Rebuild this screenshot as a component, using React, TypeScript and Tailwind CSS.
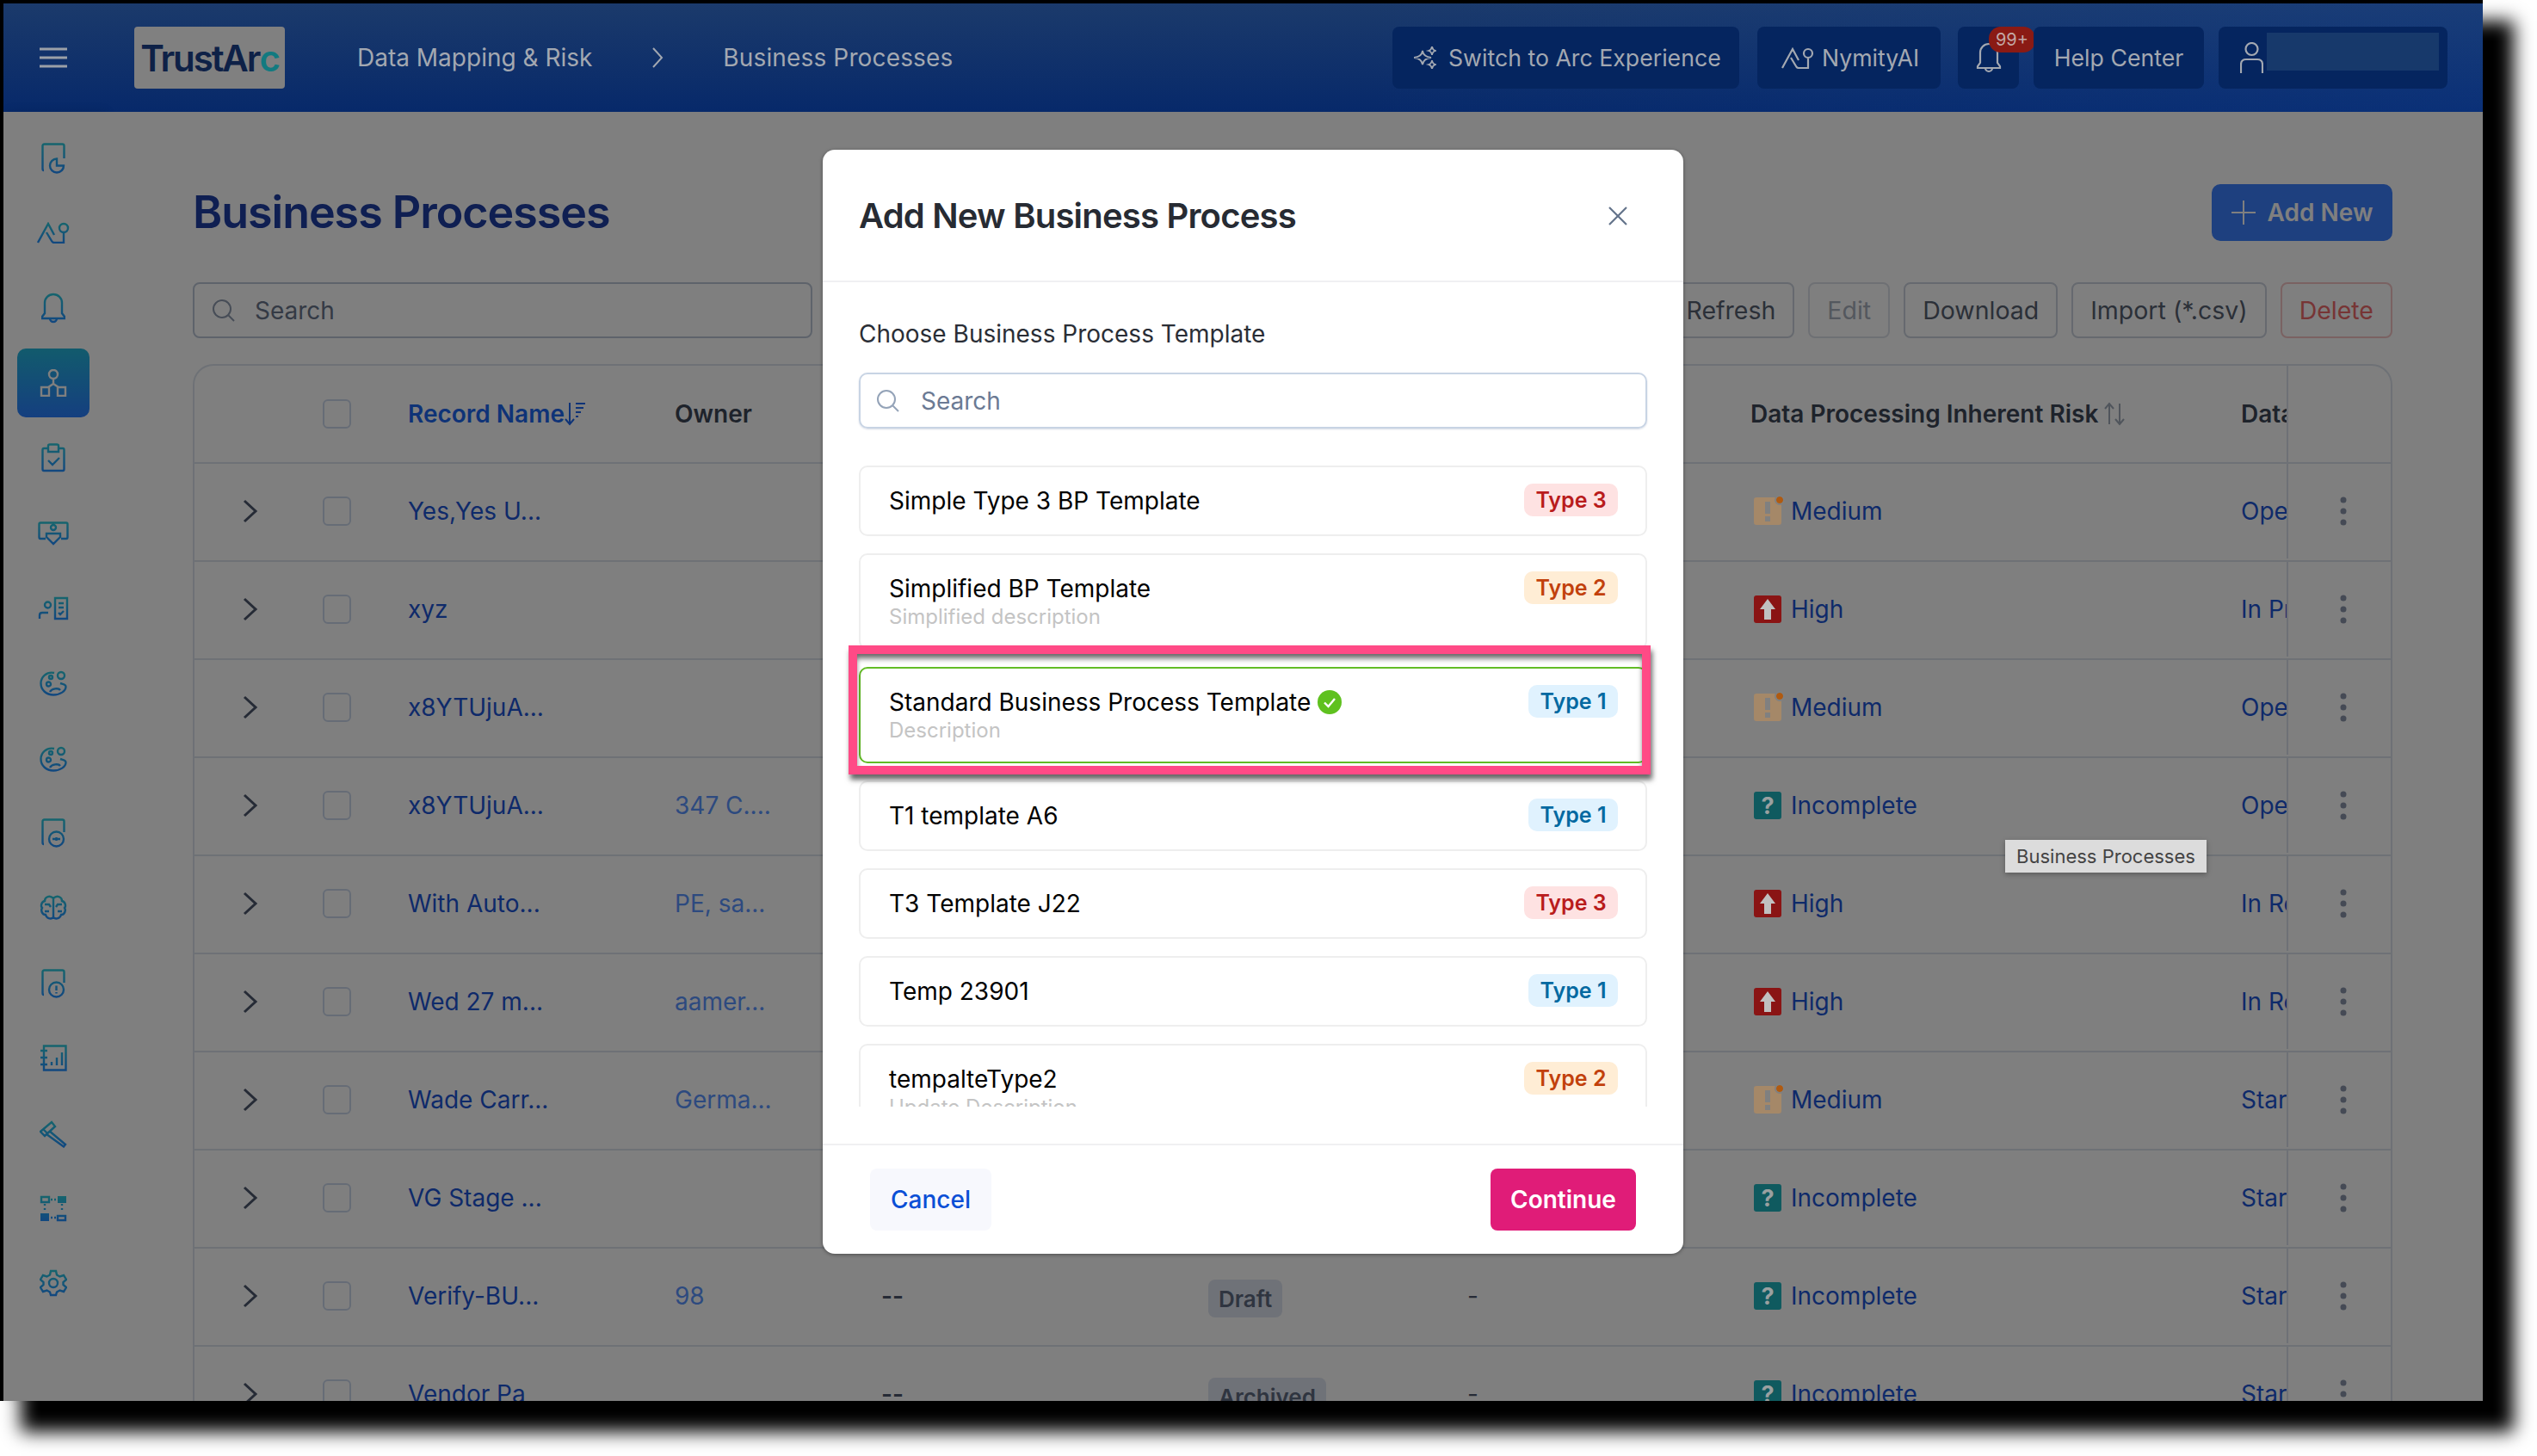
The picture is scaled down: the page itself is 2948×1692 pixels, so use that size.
import { ReactNode } from "react";

type SideIcon = { w: number; h: number; d: string; fill?: string };

const sideIcons: SideIcon[] = [
  { w: 28, h: 36, d: "M3 32 Q1.5 32 1.5 30 V3.5 Q1.5 1.5 3.5 1.5 H24.5 Q26.5 1.5 26.5 3.5 V18 M26 26.5 A8 8 0 1 1 18 18.5 V26.5 H26 A8 8 0 0 1 24 32" },
  { w: 38, h: 25, d: "M1 24 L13 2 L20 15 M11 12 L17 22 Q18 24 20 24 H31 V12 M36 7 A5 5 0 1 1 26 7 A5 5 0 1 1 36 7" },
  { w: 28, h: 36, d: "M4 24 V12 A10 10 0 0 1 24 12 V24 L27 28 V30 H1 V28 Z M10 30 A4 4 0 0 0 18 30" },
  { w: 32, h: 32, d: "M21 6 A5 5 0 1 1 11 6 A5 5 0 1 1 21 6 M16 11 V17 M16 17 L10 21 M16 17 L22 21 M2 21 H11 V31 H2 Z M21 21 H30 V31 H21 Z" },
  { w: 28, h: 34, d: "M8 6 H3 Q1.5 6 1.5 8 V30 Q1.5 32 3 32 H25 Q26.5 32 26.5 30 V8 Q26.5 6 25 6 H20 M8 10 V3 Q8 1.5 10 1.5 H18 Q20 1.5 20 3 V10 Z M8 20 L13 25 L21 17" },
  { w: 36, h: 28, d: "M9 20 H3 Q1.5 20 1.5 18 V3 Q1.5 1.5 3 1.5 H33 Q34.5 1.5 34.5 3 V18 Q34.5 20 33 20 H27 M21 7 A3 3 0 1 1 15 7 A3 3 0 1 1 21 7 M10 14 H26 V18 L18 26 L10 18 Z" },
  { w: 36, h: 28, d: "M2 26 V22 Q2 19 5 19 H12 M15 10 A3.5 3.5 0 1 1 8 10 A3.5 3.5 0 1 1 15 10 M20 2 H34 V26 H20 Z M24 8 H30 M24 13 H30 M24 19 L26 21 L30 17" },
  { w: 32, h: 31, d: "M17 4 C8 2 1.5 9 1.5 16 C1.5 24 8 29.5 16 29.5 C24 29.5 30.5 25 30.5 20 C30.5 17 27 17 24 16 M8 17 A2.5 2.5 0 1 1 13 17 A2.5 2.5 0 1 1 8 17 M11 9 A2 2 0 1 1 15 9 A2 2 0 1 1 11 9 M21 7 A4 4 0 1 1 29 7 A4 4 0 1 1 21 7 M12 26 C14 22 22 21 24 24" },
  { w: 32, h: 31, d: "M17 4 C8 2 1.5 9 1.5 16 C1.5 24 8 29.5 16 29.5 C24 29.5 30.5 25 30.5 20 C30.5 17 27 17 24 16 M8 17 A2.5 2.5 0 1 1 13 17 A2.5 2.5 0 1 1 8 17 M11 9 A2 2 0 1 1 15 9 A2 2 0 1 1 11 9 M21 7 A4 4 0 1 1 29 7 A4 4 0 1 1 21 7 M12 26 C14 22 22 21 24 24" },
  { w: 28, h: 34, d: "M3 30 Q1.5 30 1.5 28 V3.5 Q1.5 1.5 3.5 1.5 H24.5 Q26.5 1.5 26.5 3.5 V16 M26 24 A8.5 8.5 0 1 1 9 24 A8.5 8.5 0 1 1 26 24 M13 24 H22 M17.5 22 V26" },
  { w: 32, h: 32, d: "M16 3 V29 M16 5 C12 1 6 3 6 8 C2 9 1 14 3 16 C1 19 3 24 7 24 C8 28 13 30 16 27 M16 5 C20 1 26 3 26 8 C30 9 31 14 29 16 C31 19 29 24 25 24 C24 28 19 30 16 27 M6 12 H11 L13 15 M26 12 H21 L19 15 M6 20 H11 M26 20 H21" },
  { w: 28, h: 34, d: "M3 30 Q1.5 30 1.5 28 V3.5 Q1.5 1.5 3.5 1.5 H24.5 Q26.5 1.5 26.5 3.5 V16 M26 24 A8.5 8.5 0 1 1 9 24 A8.5 8.5 0 1 1 26 24 M17.5 19.5 V25 M17.5 27 V28.5" },
  { w: 32, h: 31, d: "M5 1.5 H30.5 V29.5 H5 Z M1 7 H9 M1 15 H9 M1 23 H9 M14 24 V20 M20 24 V15 M26 24 V9" },
  { w: 32, h: 33, d: "M1 14 L14 3 L18 8 L6 19 Z M4 11 L9 16 M11 13 L30 29 L28 31.5 L8 17" },
  { w: 32, h: 32, d: "M2 3 H11 V9 H2 Z M21 25 H30 V30 H21 Z M13 6 H15 M17 6 H19 M13 27 H15 M17 27 H19 M6 11 V13 M6 16 V18 M26 11 V13 M26 16 V18", fill: "M21 2 H31 V10 H21 Z M1 22 H11 V31 H1 Z" },
  { w: 32, h: 32, d: "M13 2 H19 L20 6.5 L23.5 8.5 L28 7 L31 12 L27.5 15 V18 L31 21 L28 26 L23.5 24.5 L20 26.5 L19 30 H13 L12 26.5 L8.5 24.5 L4 26 L1 21 L4.5 18 V15 L1 12 L4 7 L8.5 8.5 L12 6.5 Z M21 16 A5 5 0 1 1 11 16 A5 5 0 1 1 21 16" },
];

type RiskLevel = "Medium" | "High" | "Incomplete";
type Row = { name: string; owner?: string; risk: RiskLevel; data: string; col5?: string; status?: string; col6?: string };

const rows: Row[] = [
  { name: "Yes,Yes U...", risk: "Medium", data: "Open" },
  { name: "xyz", risk: "High", data: "In Progress" },
  { name: "x8YTUjuA...", risk: "Medium", data: "Open" },
  { name: "x8YTUjuA...", owner: "347 C....", risk: "Incomplete", data: "Open" },
  { name: "With Auto...", owner: "PE, sa...", risk: "High", data: "In Review" },
  { name: "Wed 27 m...", owner: "aamer...", risk: "High", data: "In Review" },
  { name: "Wade Carr...", owner: "Germa...", risk: "Medium", data: "Started" },
  { name: "VG Stage ...", risk: "Incomplete", data: "Started" },
  { name: "Verify-BU...", owner: "98", risk: "Incomplete", data: "Started", col5: "--", status: "Draft", col6: "-" },
  { name: "Vendor Pa", risk: "Incomplete", data: "Started", col5: "--", status: "Archived", col6: "-" },
];

const templates = [
  { name: "Simple Type 3 BP Template", type: 3 },
  { name: "Simplified BP Template", desc: "Simplified description", type: 2 },
  { name: "Standard Business Process Template", desc: "Description", type: 1, selected: true },
  { name: "T1 template A6", type: 1 },
  { name: "T3 Template J22", type: 3 },
  { name: "Temp 23901", type: 1 },
  { name: "tempalteType2", desc: "Update Description", type: 2 },
];

const rowGrid = "grid grid-cols-[149px_99px_310px_240px_380px_301px_329px_570px_53px_121px] items-center";

function SearchIcon({ className }: { className: string }) {
  return (
    <svg width="28" height="28" viewBox="0 0 28 28" fill="none" stroke="currentColor" strokeWidth="2" className={className}>
      <circle cx="12" cy="12" r="10" />
      <path d="M19.5 19.5 L26 26" />
    </svg>
  );
}

function HeaderButton({ children, className }: { children: ReactNode; className: string }) {
  return <div className={`relative flex h-[72px] items-center rounded-lg bg-[#05255f] ${className}`}>{children}</div>;
}

function Header() {
  return (
    <header className="flex h-[126px] shrink-0 items-center bg-[linear-gradient(to_right,transparent_55%,rgba(20,70,160,0.25)),linear-gradient(to_bottom,#1b3a6b,#07296a)] pl-[42px] pr-[41px] text-[28px] text-[#a3a8b1]">
      <svg width="32" height="24" viewBox="0 0 32 24" stroke="#9ba0a8" strokeWidth="3">
        <path d="M0 2 H32 M0 12 H32 M0 22 H32" />
      </svg>
      <div className="ml-[78px] flex h-[72px] w-[175px] items-center justify-center rounded bg-[#808080] text-[42px] font-semibold tracking-[-0.05em] text-[#0e2147]">
        TrustAr<span className="text-[#127a80]">c</span>
      </div>
      <span className="ml-[84px]">Data Mapping &amp; Risk</span>
      <svg width="14" height="26" viewBox="0 0 14 26" fill="none" stroke="#a3a8b1" strokeWidth="2" className="ml-[69px]">
        <path d="M2 2 L12 13 L2 24" />
      </svg>
      <span className="ml-[69px] tracking-[0.005em]">Business Processes</span>
      <div className="ml-auto flex items-center text-[26.7px]">
        <HeaderButton className="w-[403px] pl-[25px]">
          <svg width="26" height="26" viewBox="0 0 26 26" fill="none" stroke="#a3a8b1" strokeWidth="1.8">
            <path d="M10 5 Q11 12 20 13 Q11 14 10 21 Q9 14 0 13 Q9 12 10 5 Z M21 0 Q21.5 4 25 5 Q21.5 6 21 10 Q20.5 6 17 5 Q20.5 4 21 0 Z M21 16 Q21.5 20 25 21 Q21.5 22 21 26 Q20.5 22 17 21 Q20.5 20 21 16 Z" />
          </svg>
          <span className="ml-[14px]">Switch to Arc Experience</span>
        </HeaderButton>
        <HeaderButton className="ml-[21px] w-[213px] pl-[28px]">
          <svg width="38" height="25" viewBox="0 0 38 25" fill="none" stroke="#a3a8b1" strokeWidth="2.2">
            <path d="M1 24 L13 2 L20 15 M11 12 L17 22 Q18 24 20 24 H31 V12 M36 7 A5 5 0 1 1 26 7 A5 5 0 1 1 36 7" />
          </svg>
          <span className="ml-[9px]">NymityAI</span>
        </HeaderButton>
        <HeaderButton className="ml-[20px] w-[71px] justify-center">
          <svg width="30" height="36" viewBox="0 0 28 36" fill="none" stroke="#a3a8b1" strokeWidth="2.2">
            <path d="M4 24 V12 A10 10 0 0 1 24 12 V24 L27 28 V30 H1 V28 Z M10 30 A4 4 0 0 0 18 30" />
          </svg>
          <span className="absolute left-[36px] top-0 flex h-[30px] w-[54px] items-center justify-center rounded-[14px] bg-[#8a1a14] text-[20px] text-[#c3a8a6]">
            99+
          </span>
        </HeaderButton>
        <HeaderButton className="ml-[17px] w-[198px] justify-center">Help Center</HeaderButton>
        <HeaderButton className="ml-[17px] w-[266px] pl-[25px]">
          <svg width="27" height="36" viewBox="0 0 27 36" fill="none" stroke="#a3a8b1" strokeWidth="2.2">
            <circle cx="13.5" cy="8" r="7" />
            <path d="M1 36 V26 Q1 20 7 20 H20 Q26 20 26 26 V36" />
          </svg>
          <div className="absolute left-[56px] top-[7px] h-[44px] w-[200px] bg-[#17396b]" />
        </HeaderButton>
      </div>
    </header>
  );
}

function Sidebar() {
  return (
    <aside className="flex w-[116px] shrink-0 flex-col items-center bg-white pt-[10px] shadow-[4px_0_12px_rgba(0,0,0,0.1)]">
      <svg className="absolute h-0 w-0">
        <defs>
          <linearGradient id="sb" x1="0" y1="0" x2="0" y2="1">
            <stop offset="0" stopColor="#2cc8dc" />
            <stop offset="1" stopColor="#2490ff" />
          </linearGradient>
        </defs>
      </svg>
      {sideIcons.map((icon, i) => (
        <div key={i} className="flex h-[87.2px] w-full items-center justify-center">
          <div className={i === 3 ? "flex h-[80px] w-[84px] items-center justify-center rounded-[10px] bg-[linear-gradient(to_bottom,#24b6da,#2a7eff)]" : "flex"}>
            <svg width={icon.w} height={icon.h} viewBox={`0 0 ${icon.w} ${icon.h}`} fill="none" stroke={i === 3 ? "#ffffff" : "url(#sb)"} strokeWidth="2.4">
              <path d={icon.d} />
              {icon.fill && <path d={icon.fill} fill="url(#sb)" stroke="none" />}
            </svg>
          </div>
        </div>
      ))}
    </aside>
  );
}

function RiskIcon({ risk }: { risk: RiskLevel }) {
  if (risk === "Medium") {
    return (
      <div className="relative z-20 ml-[4px] flex h-[32px] w-[32px] shrink-0 flex-col items-center rounded-[3px] bg-[#a58868] pt-[5px]">
        <div className="h-[14px] w-[6px] bg-[#808080]" />
        <div className="mt-[3px] h-[6px] w-[6px] bg-[#808080]" />
        <div className="absolute right-[-2px] top-[-1px] h-[8px] w-[8px] rounded-full bg-[#b05a10] outline-2 outline-[#808080]" />
      </div>
    );
  }
  if (risk === "High") {
    return (
      <div className="relative z-20 ml-[4px] flex h-[32px] w-[32px] shrink-0 items-center justify-center rounded-[3px] bg-[#8a1414]">
        <svg width="20" height="26" viewBox="0 0 20 26" fill="#c0c0c0">
          <path d="M10 1 L19 13 H14 V25 H6 V13 H1 Z" />
        </svg>
      </div>
    );
  }
  return (
    <div className="relative z-20 ml-[4px] flex h-[32px] w-[32px] shrink-0 items-center justify-center rounded-[3px] bg-[#0f5a5f] text-[27px] font-bold leading-none text-[#9aa0a0]">
      ?
    </div>
  );
}

function Kebab() {
  return (
    <svg width="8" height="34" viewBox="0 0 8 34" fill="#8a94aa">
      <circle cx="4" cy="4" r="3.5" />
      <circle cx="4" cy="17" r="3.5" />
      <circle cx="4" cy="30" r="3.5" />
    </svg>
  );
}

function Checkbox() {
  return <div className="h-[34px] w-[33px] rounded-md border-2 border-[#ccd8ec]" />;
}

function RecordTable() {
  return (
    <div className="mt-[30px] rounded-t-[24px] border-2 border-b-0 border-[#dde3ec] text-[28px]">
      <div className={`${rowGrid} h-[112px] font-semibold text-[#3c4657]`}>
        <div />
        <Checkbox />
        <div className="flex items-center text-[#1c66ee]">
          Record Name
          <svg width="24" height="30" viewBox="0 0 24 30" fill="none" stroke="#1c66ee" strokeWidth="2">
            <path d="M6 2 V27 M1 21 L6 27 L11 21 M13 3 H24 M13 8 H22 M13 13 H19 M13 18 H16" />
          </svg>
        </div>
        <div>Owner</div>
        <div />
        <div />
        <div />
        <div className="flex items-center">
          Data Processing Inherent Risk
          <svg width="26" height="28" viewBox="0 0 26 28" fill="none" stroke="#a0aab8" strokeWidth="2" className="ml-[6px]">
            <path d="M7 26 V2 M2 8 L7 2 L12 8 M19 2 V26 M14 20 L19 26 L24 20" />
          </svg>
        </div>
        <div className="overflow-hidden whitespace-nowrap">Data</div>
        <div className="h-full border-l-2 border-[#dde3ec]" />
      </div>
      {rows.map((row, i) => (
        <div key={i} className={`${rowGrid} h-[114px] border-t-2 border-[#dde3ec] pb-[2px]`}>
          <svg width="18" height="28" viewBox="0 0 18 28" fill="none" stroke="#4c566c" strokeWidth="3" className="ml-[56px]">
            <path d="M2 2 L15 14 L2 26" />
          </svg>
          <Checkbox />
          <div className="text-[#1c54d4]">{row.name}</div>
          <div className="text-[#5a94ff]">{row.owner}</div>
          <div className="font-semibold text-[#4c566c]">{row.col5}</div>
          <div>
            {row.status && (
              <span className="mt-[6px] inline-flex h-[44px] items-center rounded-lg bg-[#dfe4f0] px-[12px] text-[26px] font-semibold text-[#5e6a80]">
                {row.status}
              </span>
            )}
          </div>
          <div className="text-[#4c566c]">{row.col6}</div>
          <div className="flex items-center gap-[11px] text-[#1c54d4]">
            <RiskIcon risk={row.risk} />
            {row.risk}
          </div>
          <div className="overflow-hidden whitespace-nowrap text-[#1c54d4]">{row.data}</div>
          <div className="flex h-full items-center justify-center border-l-2 border-[#dde3ec] pl-[8px]">
            <Kebab />
          </div>
        </div>
      ))}
    </div>
  );
}

function Content() {
  const tools = ["Refresh", "Edit", "Download", "Import (*.csv)", "Delete"];
  return (
    <main className="min-w-0 flex-1 overflow-hidden bg-white pl-[104px] pr-[105px] pt-[84px]">
      <div className="flex h-[66px] items-center justify-between">
        <h1 className="text-[52px] font-semibold tracking-[-0.02em] text-[#1f3fa4]">Business Processes</h1>
        <button className="flex h-[66px] w-[210px] items-center justify-center gap-[14px] rounded-[10px] bg-[#3c80ff] text-[28px] font-semibold text-white">
          <svg width="28" height="28" viewBox="0 0 28 28" stroke="#ffffff" strokeWidth="2">
            <path d="M14 0 V28 M0 14 H28" />
          </svg>
          Add New
        </button>
      </div>
      <div className="mt-[48px] flex h-[65px] items-center justify-between text-[28.5px]">
        <div className="flex h-full w-[720px] items-center rounded-lg border-2 border-[#bcc6d6] pl-[20px] text-[28px] text-[#68748a]">
          <SearchIcon className="text-[#8e9aae]" />
          <span className="ml-[22px]">Search</span>
        </div>
        <div className="flex h-full gap-4">
          {tools.map((t) => (
            <div
              key={t}
              className={`flex items-center rounded-lg border-2 px-5 pt-[1px] ${
                t === "Delete"
                  ? "border-[#f4c4c4] text-[#ee6a6a]"
                  : t === "Edit"
                    ? "border-[#dde1e8] text-[#a8b0bc]"
                    : "border-[#ccd3de] text-[#566070]"
              }`}
            >
              {t}
            </div>
          ))}
        </div>
      </div>
      <RecordTable />
    </main>
  );
}

function TypeBadge({ type }: { type: number }) {
  const style =
    type === 1
      ? "w-[104px] bg-[#e0f2fe] text-[#0369a1]"
      : type === 2
        ? "w-[109px] bg-[#ffedd5] text-[#c2410c]"
        : "w-[109px] bg-[#fee2e2] text-[#b91c1c]";
  return (
    <span className={`flex h-[38px] shrink-0 items-center justify-center rounded-[10px] pt-[2px] text-[25px] font-semibold ${style}`}>
      Type {type}
    </span>
  );
}

function AddModal() {
  return (
    <div className="absolute left-[952px] top-[44px] z-30 flex h-[1283px] w-[1000px] flex-col overflow-hidden rounded-[14px] bg-white shadow-[0_1px_4px_rgba(0,0,0,0.4)]">
      <div className="flex h-[154px] shrink-0 items-center justify-between border-b-2 border-[#f0f0f2] pl-[42px] pr-[64px] pt-[2px]">
        <h2 className="text-[40px] font-semibold tracking-[-0.02em] text-[#272b33]">Add New Business Process</h2>
        <svg width="24" height="24" viewBox="0 0 24 24" fill="none" stroke="#64748b" strokeWidth="2.2">
          <path d="M2 2 L22 22 M22 2 L2 22" />
        </svg>
      </div>
      <div className="min-h-0 flex-1 px-[42px] pt-[43px]">
        <div className="h-[34px] text-[28px] leading-[34px] text-[#2a2e36]">Choose Business Process Template</div>
        <div className="mt-[28px] flex h-[65px] items-center rounded-[10px] border-2 border-[#c8d4e4] pl-[18px] text-[28px] text-[#6b7a94] shadow-[0_1px_2px_rgba(100,120,160,0.25)]">
          <SearchIcon className="text-[#94a3b8]" />
          <span className="ml-[24px]">Search</span>
        </div>
        <div className="mt-[43px] flex h-[745px] flex-col gap-5 overflow-hidden">
          {templates.map((t) => (
            <div
              key={t.name}
              className={`flex shrink-0 items-start justify-between rounded-[10px] border-2 pl-[33px] pr-[32px] pt-[19px] ${
                t.selected ? "border-[#62bc25]" : "border-[#eeeeee]"
              } ${t.desc ? "h-[112px]" : "h-[82px]"}`}
            >
              <div>
                <div className="mt-[3px] flex h-[34px] items-center text-[28px] text-black">
                  {t.name}
                  {t.selected && (
                    <svg width="28" height="28" viewBox="0 0 28 28" className="ml-[8px]">
                      <circle cx="14" cy="14" r="14" fill="#5fc11f" />
                      <path d="M8 14.5 L12.5 19 L20 10" fill="none" stroke="#ffffff" strokeWidth="2.4" />
                    </svg>
                  )}
                </div>
                {t.desc && <div className="h-[32px] text-[24px] leading-[32px] text-[#c4c4c4]">{t.desc}</div>}
              </div>
              <TypeBadge type={t.type} />
            </div>
          ))}
        </div>
      </div>
      <div className="flex h-[128px] shrink-0 items-start justify-between border-t-2 border-[#f0f0f2] pl-[55px] pr-[55px] pt-[27px] text-[28px]">
        <button className="flex h-[72px] w-[141px] items-center justify-center rounded-lg bg-[#f7f8fd] font-medium text-[#0b4fd6]">Cancel</button>
        <button className="flex h-[72px] w-[169px] items-center justify-center rounded-lg bg-[#e01c78] font-semibold text-white">Continue</button>
      </div>
    </div>
  );
}

export default function App() {
  return (
    <div className="relative h-[1692px] w-[2948px] overflow-hidden bg-white [font-family:Inter,sans-serif]">
      <div className="relative flex h-[1628px] w-[2885px] flex-col border-l-4 border-t-4 border-black shadow-[30px_30px_20px_6px_#000]">
        <Header />
        <div className="relative flex min-h-0 flex-1">
          <Sidebar />
          <Content />
          <div className="absolute inset-0 z-10 bg-black/50" />
          <AddModal />
          <div className="absolute left-[2326px] top-[846px] z-30 flex h-[38px] w-[234px] items-center justify-center bg-[#dcdcdc] text-[22px] text-[#444444] shadow-[0_2px_6px_rgba(0,0,0,0.3)]">
            Business Processes
          </div>
          <div className="pointer-events-none absolute left-[982px] top-[620px] z-40 h-[150px] w-[932px] border-[10px] border-[#ff4a86] shadow-[2px_6px_6px_rgba(0,0,0,0.6),inset_0_6px_6px_-1px_rgba(0,0,0,0.6)]" />
        </div>
      </div>
    </div>
  );
}
